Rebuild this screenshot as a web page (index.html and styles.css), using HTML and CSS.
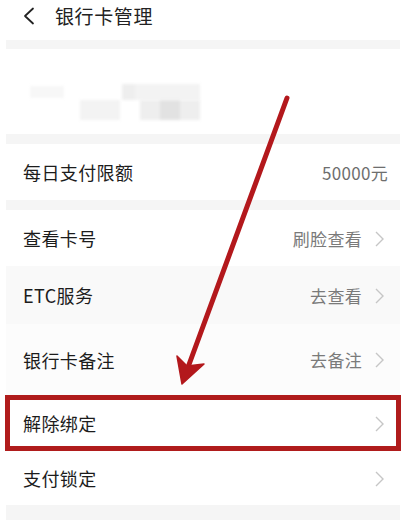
FILE: index.html
```html
<!DOCTYPE html>
<html lang="zh">
<head>
<meta charset="utf-8">
<title>银行卡管理</title>
<link rel="stylesheet" href="styles.css">
</head>
<body>
<div class="page">
  <header class="topbar">
    <svg class="back" width="14" height="18" viewBox="0 0 14 18"><path d="M11 1.5 L3 9 L11 16.5" fill="none" stroke="#222" stroke-width="1.8" stroke-linecap="round" stroke-linejoin="round"/></svg>
    <span class="title">银行卡管理</span>
  </header>
  <main class="wrap">
    <section class="card card-info">
      <div class="blur-row one">
        <span class="b b-faint w34"></span>
        <span class="sp58"></span>
        <span class="b b-l w13"></span>
        <span class="b b-xl w65"></span>
      </div>
      <div class="blur-row two">
        <span class="b b-xl w40"></span>
        <span class="sp20"></span>
        <span class="b b-l w20"></span>
        <span class="b b-d w20"></span>
        <span class="b b-l w20"></span>
      </div>
    </section>
    <section class="card">
      <div class="row row-plain h56">
        <span class="label">每日支付限额</span>
        <span class="value plain">50000元</span>
      </div>
    </section>
    <section class="card">
      <div class="row h56">
        <span class="label">查看卡号</span>
        <span class="value">刷脸查看</span>
        <span class="chev"><svg width="9" height="16" viewBox="0 0 9 16"><path d="M1 1 L8 8 L1 15" fill="none" stroke="#c6c6c6" stroke-width="1.4"/></svg></span>
      </div>
      <div class="row h58 tint">
        <span class="label">ETC服务</span>
        <span class="value">去查看</span>
        <span class="chev"><svg width="9" height="16" viewBox="0 0 9 16"><path d="M1 1 L8 8 L1 15" fill="none" stroke="#c6c6c6" stroke-width="1.4"/></svg></span>
      </div>
      <div class="row h71 tint2">
        <span class="label">银行卡备注</span>
        <span class="value">去备注</span>
        <span class="chev"><svg width="9" height="16" viewBox="0 0 9 16"><path d="M1 1 L8 8 L1 15" fill="none" stroke="#c6c6c6" stroke-width="1.4"/></svg></span>
      </div>
      <div class="row h56">
        <span class="label">解除绑定</span>
        <span class="value"></span>
        <span class="chev"><svg width="9" height="16" viewBox="0 0 9 16"><path d="M1 1 L8 8 L1 15" fill="none" stroke="#c6c6c6" stroke-width="1.4"/></svg></span>
      </div>
      <div class="row h54">
        <span class="label">支付锁定</span>
        <span class="value"></span>
        <span class="chev"><svg width="9" height="16" viewBox="0 0 9 16"><path d="M1 1 L8 8 L1 15" fill="none" stroke="#c6c6c6" stroke-width="1.4"/></svg></span>
      </div>
    </section>
  </main>
  <div class="highlight"></div>
  <svg class="arrow" width="406" height="520" viewBox="0 0 406 520">
    <line x1="287" y1="98" x2="187" y2="370" stroke="#b3181c" stroke-width="5" stroke-linecap="round"/>
    <polygon points="182,384 177,356 187,366 204,364" fill="#b3181c" stroke="#b3181c" stroke-width="1.5" stroke-linejoin="round"/>
  </svg>
</div>
</body>
</html>
```
FILE: styles.css
```css
* { box-sizing: border-box; }
html, body { margin: 0; padding: 0; background: #ffffff; }
body {
  font-family: "Noto Sans CJK SC", "Noto Sans", sans-serif;
  color: #1c1c1c;
}
.page {
  position: relative;
  width: 406px;
  height: 520px;
  overflow: hidden;
  background: #ffffff;
}
.topbar {
  height: 40px;
  display: flex;
  align-items: flex-start;
  padding: 6px 0 0 22px;
  background: #ffffff;
}
.back { margin-top: 1px; }
.title {
  margin-left: 19px;
  font-size: 19px;
  line-height: 19px;
  color: #222;
  letter-spacing: 0.6px;
}
.wrap {
  margin: 0 6px;
  padding-top: 9px;
  height: 480px;
  background: #f5f5f5;
  display: flex;
  flex-direction: column;
  gap: 10px;
}
.card { background: #ffffff; }
.card-info {
  height: 85px;
  padding: 31px 0 0 24px;
  display: flex;
  flex-direction: column;
}
.blur-row { display: flex; height: 20px; filter: blur(1.5px); }
.blur-row.one { padding-top: 4px; height: 20px; }
.blur-row.two { padding-left: 50px; }
.b { display: block; height: 100%; }
.b-faint { background: #f7f7f7; height: 12px; margin-top: 2px; }
.b-l { background: #eeeeee; }
.b-xl { background: #f3f3f3; }
.b-d { background: #e2e2e2; }
.w13 { width: 13px; }
.w20 { width: 20px; }
.w34 { width: 34px; }
.w40 { width: 40px; }
.w65 { width: 65px; }
.sp58 { width: 58px; }
.sp20 { width: 20px; }
.row {
  display: flex;
  align-items: center;
  padding: 0 16px 0 17px;
}
.row-plain { padding-right: 12px; }
.h54 { height: 54px; }
.h56 { height: 56px; }
.h58 { height: 58px; }
.h71 { height: 71px; }
.tint { background: #f9f9f9; }
.tint2 { background: #fcfcfc; }
.label {
  flex: 1;
  font-size: 18px;
  color: #1c1c1c;
  letter-spacing: 0.4px;
}
.value {
  font-size: 17px;
  color: #7a7a7a;
  letter-spacing: 0.3px;
}
.value.plain { color: #6e6e6e; }
.chev {
  display: flex;
  margin-left: 13px;
  padding-top: 1px;
}
.highlight {
  position: absolute;
  left: 5px;
  top: 395px;
  width: 396px;
  height: 56px;
  border: 5px solid #b01c1c;
}
.arrow {
  position: absolute;
  left: 0;
  top: 0;
}
```
